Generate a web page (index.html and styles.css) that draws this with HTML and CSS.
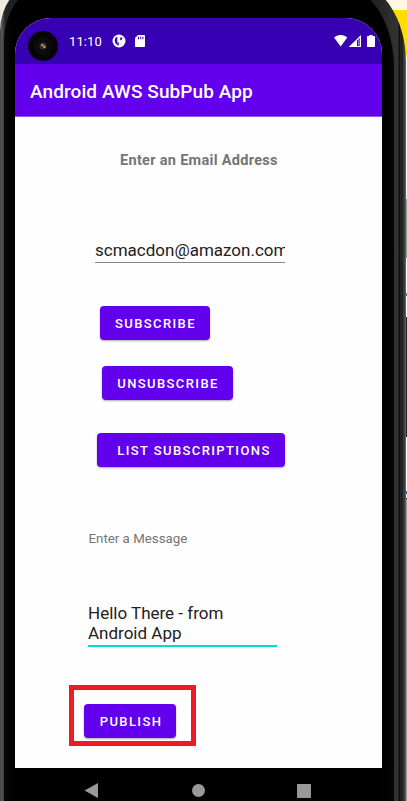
FILE: index.html
```html
<!DOCTYPE html>
<html lang="en">
<head>
<meta charset="utf-8">
<title>Android AWS SubPub App</title>
<link rel="stylesheet" href="styles.css">
</head>
<body>
<div class="desktop">
  <div class="desktop-edge"></div>
  <div class="phone">
    <main class="screen">
      <div class="status">
        <svg class="camera" width="30" height="30" viewBox="0 0 30 30"><circle cx="15" cy="15" r="15" fill="#080405"/><circle cx="15" cy="15" r="9.5" fill="#0c0b0b"/><circle cx="15" cy="15" r="3.5" fill="#3a2b26"/><path d="M12.500 14l2-1.500 2 2-1 1.500z" fill="#a48268"/><circle cx="16.500" cy="16" r="1" fill="#c9b5a5"/></svg>
        <span class="time">11:10</span>
        <svg class="dnd" width="14" height="14" viewBox="0 0 14 14"><circle cx="7" cy="7" r="6.500" fill="#fff"/><path d="M5.300 2.500V11Q2.700 10 2.700 6.800T5.300 2.500zM8.200 3.600h2v1.500L9.200 6.300h-1z" fill="#3700b3"/><path d="M5.300 8.500h1.500v2.900H5.300z" fill="#3700b3"/></svg>
        <svg class="sd" width="10" height="12" viewBox="0 0 10 12"><path d="M3 0h6.200q.8 0 .8.800v10.400q0 .8-.8.800H.8Q0 12 0 11.200V3z" fill="#fff"/><path d="M3 1.800h1v2.400H3zM5.200 1.800h1v2.400h-1zM7.400 1.800h1v2.400h-1z" fill="#3700b3"/></svg>
        <svg class="signals" width="42" height="12" viewBox="0 0 42 12"><path d="M0 2.500Q6.700-2.600 13.300 2.500L6.700 11.500z" fill="#fff"/><path d="M14.700 12L27 0v12z" fill="#fff"/><path d="M23 5.500L25.700 2.800v8.200H23z" fill="#3700b3"/><path d="M24.300 4h.8v6.500h-.8z" fill="#b9a6e4"/><path d="M35.300 0h3.400v1h1.500q.8 0 .8.800v9.400q0 .8-.8.800h-6.400q-.8 0-.8-.8V1.800q0-.8.8-.8h1.500z" fill="#fff"/></svg>
      </div>
      <header class="appbar"><h1>Android AWS SubPub App</h1></header>
      <section class="content">
        <label class="email-label">Enter an Email Address</label>
        <div class="email">scmacdon@amazon.com</div>
        <button class="btn subscribe">SUBSCRIBE</button>
        <button class="btn unsubscribe">UNSUBSCRIBE</button>
        <button class="btn list">LIST SUBSCRIPTIONS</button>
        <label class="message-label">Enter a Message</label>
        <div class="message">Hello There - from<br>Android App</div>
        <div class="highlight"><button class="btn publish">PUBLISH</button></div>
      </section>
      <nav class="nav">
        <svg width="367" height="33" viewBox="0 0 367 33"><path d="M69.500 22.500L83 15v15z" fill="#999"/><circle cx="183.500" cy="22.500" r="6.500" fill="#999"/><rect x="282" y="16" width="14" height="14" rx=".7" fill="#999"/></svg>
      </nav>
    </main>
  </div>
</div>
</body>
</html>
```
FILE: styles.css
```css
* { box-sizing: border-box; }
body { margin: 0; font-family: Roboto, sans-serif; }
.desktop { position: relative; display: flow-root; width: 407px; height: 801px; overflow: hidden; background: #eeeade; }
.desktop-edge {
  position: absolute; right: 0; top: 0; width: 27px; height: 801px;
  background: linear-gradient(#fff7df 0 10px, #fd0 10px 55px, #f2f2f2 55px 199px, #7fa78e 199px 258px, #fff 258px 293px, #1595dc 293px 296px, #fff 296px 317px, #222 317px 437px, #fff 437px 491px, #0869c9 491px 494px, #fff 494px 498px, #222 498px 499px, #999 499px);
}
.phone {
  position: relative; width: 406px; height: 849px; margin-top: -18px; padding: 36px 24px 0 15px; overflow: hidden;
  border-radius: 40px 55px 0 0 / 50px 80px 0 0;
  background: linear-gradient(90deg, #303134 0, #5a5b5f 1px, #494a4d 3px, #222325 5px, #1b1b1d 30px, #000 60px, #000 340px, #222 375px, #303030 394px, #333 398px, #0c0c0c 399px, #151515 400px, #303030 401px, #101010 402px, #333 403px, #444 405px, #777 406px);
}
.phone::before {
  content: ""; position: absolute; left: 4px; right: 12px; top: 6px; height: 843px;
  border-radius: 38px 50px 0 0 / 54px 80px 0 0;
  background: linear-gradient(90deg, #08080a, #000 10px, #000 376px, #050506);
}
.screen { position: relative; width: 367px; height: 783px; border-radius: 36px 36px 0 0; overflow: hidden; background: #fff; }
.status { display: flex; align-items: flex-start; height: 46px; background: #3700b3; color: #fff; }
.camera { margin: 13px 0 0 13px; }
.time { width: 34px; margin: 16px 0 0 11px; font-size: 13px; line-height: 16px; font-weight: 400; letter-spacing: .1px; white-space: nowrap; }
.dnd { margin: 16px 0 0 9px; }
.sd { margin: 17px 0 0 9px; }
.signals { margin: 17px 6px 0 auto; }
.appbar { height: 53px; padding: 15px 0 0 15px; background: #6200ee; border-bottom: 1px solid #925bea; }
h1 { margin: 0; color: #fff; font-size: 19px; line-height: 26px; font-weight: 500; letter-spacing: .09px; white-space: nowrap; }
.content { display: flex; flex-direction: column; align-items: flex-start; height: 651px; background: #fefefe; }
label { color: #757575; white-space: nowrap; }
.email-label { margin: 35px 0 0 105px; font-size: 14.500px; line-height: 18px; font-weight: 700; letter-spacing: .3px; }
.email { width: 190px; height: 26px; margin: 67px 0 0 80px; padding-top: 3px; overflow: hidden; color: #212121; border-bottom: 1px solid #858585; font-size: 17px; line-height: 20px; white-space: nowrap; }
.btn { display: block; height: 34px; padding: 1px 0 0 1px; border: 0; border-radius: 4px; background: #6200ee; color: #fff; box-shadow: 0 1px 2px #0005; font: 500 13px/16px Roboto, sans-serif; letter-spacing: 1.400px; white-space: nowrap; }
.subscribe { width: 110px; margin: 43px 0 0 85px; }
.unsubscribe { width: 131px; margin: 26px 0 0 87px; }
.list { width: 188px; margin: 33px 0 0 82px; padding-left: 6px; }
.message-label { margin: 63px 0 0 73.500px; font-size: 13.300px; line-height: 17px; }
.message { width: 189px; height: 45px; margin: 55px 0 0 73px; padding-top: 2px; color: #212121; border-bottom: 2px solid #03dac5; font-size: 17px; line-height: 19.500px; }
.highlight { width: 127px; height: 61px; margin: 38px 0 0 54px; padding: 14px 0 0 10px; border: 5px solid #ed1c24; }
.publish { width: 92px; padding-left: 2px; }
.nav { height: 33px; background: #000; }
.nav svg { display: block; }
```
